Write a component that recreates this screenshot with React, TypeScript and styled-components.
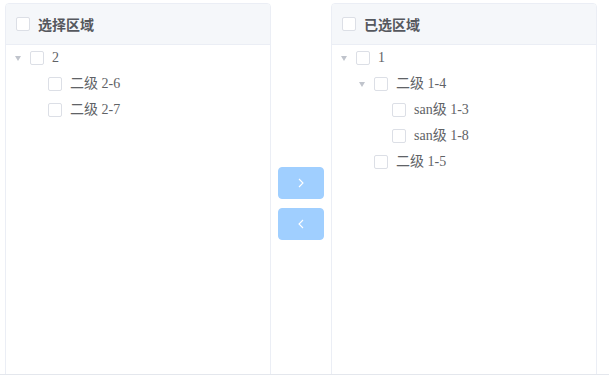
import React from 'react';
import styled, {createGlobalStyle} from 'styled-components';

const GlobalStyle = createGlobalStyle`
    html, body {
        margin: 0;
        padding: 0;
        background: #fff;
    }
`;

type TreeNode = {
    label: string;
    children?: TreeNode[];
};

const leftData: TreeNode[] = [
    {label: '2', children: [{label: '二级 2-6'}, {label: '二级 2-7'}]},
];

const rightData: TreeNode[] = [
    {
        label: '1',
        children: [
            {label: '二级 1-4', children: [{label: 'san级 1-3'}, {label: 'san级 1-8'}]},
            {label: '二级 1-5'},
        ],
    },
];

const Page = styled.div`
    box-sizing: border-box;
    height: 375px;
    padding: 3px 0 0 5px;
    border-bottom: 1px solid #e4e7ed;
    overflow: hidden;
`;

const Transfer = styled.div`
    display: flex;
    align-items: center;
`;

const Panel = styled.div`
    box-sizing: border-box;
    width: 266px;
    height: 401px;
    flex-shrink: 0;
    border: 1px solid #ebeef5;
    border-radius: 4px;
    background: #fff;
    overflow: hidden;
`;

const PanelHeader = styled.div`
    display: flex;
    align-items: center;
    height: 40px;
    padding-left: 10px;
    background: #f5f7fa;
    border-bottom: 1px solid #ebeef5;
`;

const HeaderLabel = styled.span`
    margin-left: 8px;
    font-family: "Noto Sans CJK SC", "Noto Sans", sans-serif;
    font-size: 14px;
    font-weight: 700;
    color: #55585e;
`;

const Checkbox = styled.span`
    display: inline-block;
    box-sizing: border-box;
    width: 14px;
    height: 14px;
    border: 1px solid #dcdfe6;
    border-radius: 2px;
    background: #fff;
    flex-shrink: 0;
`;

const Buttons = styled.div`
    display: flex;
    flex-direction: column;
    gap: 9px;
    padding: 0 7px;
`;

const ArrowButton = styled.button`
    display: flex;
    align-items: center;
    justify-content: center;
    width: 46px;
    height: 32px;
    padding: 0;
    border: 1px solid #a0cfff;
    border-radius: 4px;
    background: #a0cfff;
    cursor: not-allowed;
`;

const Row = styled.div<{ $level: number }>`
    display: flex;
    align-items: center;
    height: 26px;
    padding-left: ${p => p.$level * 18}px;
    font-family: "Liberation Serif", "Noto Sans CJK SC", serif;
    font-size: 14px;
    line-height: 26px;
    color: #606266;
`;

const Caret = styled.span<{ $leaf: boolean }>`
    display: flex;
    align-items: center;
    justify-content: center;
    width: 24px;
    height: 24px;
    visibility: ${p => (p.$leaf ? 'hidden' : 'visible')};

    &::before {
        content: '';
        border-left: 3.5px solid transparent;
        border-right: 3.5px solid transparent;
        border-top: 5px solid #c0c4cc;
    }
`;

const Label = styled.span`
    margin-left: 8px;
    margin-top: -1px;
    white-space: nowrap;
`;

const Chevron = ({dir}: { dir: 'left' | 'right' }) => (
    <svg width="12" height="12" viewBox="0 0 12 12">
        <polyline
            points={dir === 'right' ? '4,2 8,6 4,10' : '8,2 4,6 8,10'}
            fill="none"
            stroke="#fff"
            strokeWidth="1.1"
        />
    </svg>
);

const TreeRows = ({nodes, level}: { nodes: TreeNode[]; level: number }) => (
    <>
        {nodes.map(node => (
            <React.Fragment key={node.label}>
                <Row $level={level}>
                    <Caret $leaf={!node.children}/>
                    <Checkbox/>
                    <Label>{node.label}</Label>
                </Row>
                {node.children && <TreeRows nodes={node.children} level={level + 1}/>}
            </React.Fragment>
        ))}
    </>
);

const TransferPanel = ({title, data}: { title: string; data: TreeNode[] }) => (
    <Panel>
        <PanelHeader>
            <Checkbox/>
            <HeaderLabel>{title}</HeaderLabel>
        </PanelHeader>
        <TreeRows nodes={data} level={0}/>
    </Panel>
);

export default function App() {
    return (
        <Page>
            <GlobalStyle/>
            <Transfer>
                <TransferPanel title="选择区域" data={leftData}/>
                <Buttons>
                    <ArrowButton disabled><Chevron dir="right"/></ArrowButton>
                    <ArrowButton disabled><Chevron dir="left"/></ArrowButton>
                </Buttons>
                <TransferPanel title="已选区域" data={rightData}/>
            </Transfer>
        </Page>
    );
}
